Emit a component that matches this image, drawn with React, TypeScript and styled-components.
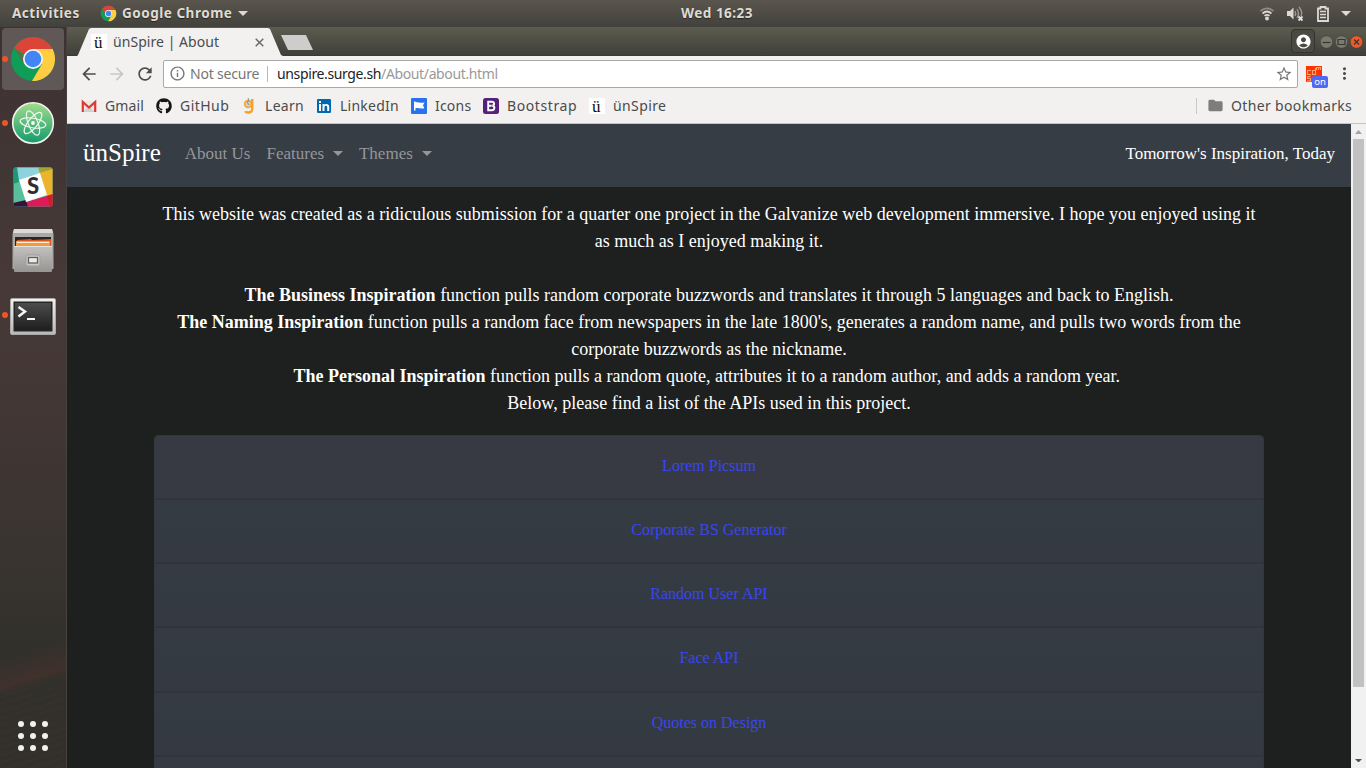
import React from 'react';
import styled, { createGlobalStyle } from 'styled-components';
import {
  MdArrowBack,
  MdArrowForward,
  MdRefresh,
  MdInfoOutline,
  MdStarBorder,
  MdMoreVert,
  MdFolder,
  MdAccountCircle,
} from 'react-icons/md';
import { FaGithub } from 'react-icons/fa';

const ui = '"Noto Sans", "Open Sans", sans-serif';
const serif = '"Liberation Serif", "Times New Roman", serif';

const GlobalStyle = createGlobalStyle`
  * { box-sizing: border-box; }
  body { margin: 0; overflow: hidden; background: #1e201f; }
  svg { display: block; flex: none; }
`;

const Desktop = styled.div`
  width: 1366px;
  height: 768px;
  display: flex;
  flex-direction: column;
  overflow: hidden;
  font-family: ${ui};
`;

const TopBar = styled.header`
  height: 27px;
  flex: none;
  display: grid;
  grid-template-columns: 669px auto 1fr;
  align-items: center;
  padding: 0 15px 0 12px;
  background: linear-gradient(#5a564e, #42413c);
  color: #dfdbd2;
  font-weight: 700;
  font-size: 13.5px;
  line-height: 25px;
  text-shadow: 0 1px 1px rgba(0, 0, 0, 0.5);
`;

const BarGroup = styled.div<{ $end?: boolean }>`
  display: flex;
  align-items: center;
  justify-content: ${(p) => (p.$end ? 'flex-end' : 'flex-start')};
`;

const Label = styled.span<{ $w?: number; $ls?: number }>`
  display: block;
  white-space: nowrap;
  flex: none;
  width: ${(p) => (p.$w ? `${p.$w}px` : 'auto')};
  letter-spacing: ${(p) => p.$ls ?? 0}px;
`;

const Space = styled.span<{ $w: number }>`
  flex: none;
  width: ${(p) => p.$w}px;
`;

const Work = styled.div`
  flex: 1;
  min-height: 0;
  display: flex;
`;

const Dock = styled.nav`
  width: 67px;
  flex: none;
  display: flex;
  flex-direction: column;
  border-right: 1px solid #454140;
  background:
    repeating-linear-gradient(163deg, rgba(110, 60, 50, 0.1) 0 1px, transparent 1px 7px) 0 640px / 67px 101px no-repeat,
    linear-gradient(163deg, transparent 60%, rgba(90, 50, 44, 0.35) 80%, transparent 86%) 0 540px / 67px 130px no-repeat,
    linear-gradient(#3d3232 0, #463938 35%, #433735 50%, #37332f 75%, #31302b 85%, #33302c 100%);
`;

const DockItem = styled.div`
  height: 64px;
  flex: none;
  display: flex;
  align-items: center;
`;

const DockTile = styled.div<{ $active?: boolean }>`
  width: 62px;
  height: 62px;
  margin-left: 2px;
  border-radius: 4px;
  display: flex;
  align-items: center;
  background: ${(p) => (p.$active ? '#605856' : 'transparent')};
`;

const RunDot = styled.i<{ $on?: boolean }>`
  width: 6px;
  height: 6px;
  border-radius: 50%;
  background: ${(p) => (p.$on ? '#ed5523' : 'transparent')};
`;

const DockIcon = styled.div`
  width: 48px;
  height: 48px;
  margin-left: 1px;
`;

const AppsGrid = styled.div`
  width: 30px;
  height: 30px;
  margin: auto auto 17px 18px;
  display: grid;
  grid-template-columns: repeat(3, 6px);
  gap: 6px;
  i {
    width: 6px;
    height: 6px;
    border-radius: 50%;
    background: #f2f1ec;
  }
`;

const Browser = styled.section`
  flex: 1;
  min-width: 0;
  display: flex;
  flex-direction: column;
`;

const TabStrip = styled.div`
  height: 29px;
  flex: none;
  display: flex;
  align-items: flex-end;
  padding: 0 2px 0 10px;
  background: linear-gradient(#5d5c50, #3f403a 96%, #353630);
`;

const Tab = styled.div`
  width: 206px;
  height: 28px;
  display: flex;
  align-items: center;
  padding: 0 16px 0 14px;
  background: #f2f1f0;
  clip-path: polygon(0 100%, 1px 96%, 12px 4%, 14px 0, 191px 0, 193px 4%, 204px 96%, 100% 100%);
  color: #4b4b4b;
  font-size: 14px;
  line-height: 17px;
`;

const TabTitle = styled(Label)`
  padding-bottom: 2px;
`;

const NewTab = styled.div`
  width: 32px;
  height: 15px;
  margin: 0 auto 6px -2px;
  background: #cecdcb;
  clip-path: polygon(0 0, 25px 0, 100% 100%, 7px 100%);
`;

const Favicon = styled.span`
  width: 16px;
  height: 16px;
  flex: none;
  background: #fff;
  color: #111;
  font: 17px/17px ${serif};
  text-indent: 3px;
`;

const ProfileButton = styled.div`
  width: 24px;
  height: 24px;
  margin-bottom: 3px;
  border: 1px solid #33342f;
  border-radius: 4px;
  display: flex;
  align-items: center;
  justify-content: center;
  background: #4a4a43;
  color: #fff;
`;

const WindowControls = styled.div`
  display: flex;
  margin: 0 0 7px 4px;
`;

const Toolbar = styled.div`
  height: 36px;
  flex: none;
  display: flex;
  align-items: center;
  padding: 0 0 1px 12px;
  background: #f2f1f0;
  color: #4c4c4c;
`;

const AddressBar = styled.div`
  width: 1135px;
  height: 28px;
  margin-left: 8px;
  display: flex;
  align-items: center;
  padding: 0 4px 0 5px;
  border: 1px solid #a9a9a9;
  border-radius: 2px;
  background: #fff;
  color: #767676;
  font-size: 14px;
`;

const Host = styled.span`
  color: #222;
`;

const Path = styled.span`
  color: #999;
`;

const StarSlot = styled.span`
  margin-left: auto;
`;

const Divider = styled.span<{ $c: string }>`
  width: 1px;
  height: 16px;
  background: ${(p) => p.$c};
`;

const Extension = styled.div`
  position: relative;
  width: 16px;
  height: 16px;
  margin: 0 13px 0 8px;
  background: #ff3500;
`;

const ExtensionText = styled.svg`
  fill: none;
  stroke: #ffa070;
  stroke-width: 1.1;
`;

const ExtensionBadge = styled.span`
  position: absolute;
  left: 6px;
  top: 10px;
  width: 16px;
  height: 12px;
  border-radius: 2px;
  background: #5168f5;
  color: #fff;
  font-size: 9.5px;
  line-height: 12px;
  text-align: center;
`;

const Bookmarks = styled.div`
  height: 32px;
  flex: none;
  display: flex;
  align-items: center;
  gap: 12px;
  padding: 0 14px 4px 14px;
  border-bottom: 1px solid #c6c5c4;
  background: #f2f1f0;
  color: #4b4b4b;
  font-size: 14px;
`;

const Bookmark = styled.div`
  display: flex;
  align-items: center;
  gap: 8px;
`;

const OtherBookmarks = styled.div`
  margin-left: auto;
  display: flex;
  align-items: center;
`;

const Viewport = styled.main`
  flex: 1;
  min-height: 0;
  display: flex;
  background: #1e201f;
  font-family: ${serif};
`;

const Site = styled.div`
  flex: 1;
  min-width: 0;
  overflow: hidden;
`;

const NavBar = styled.div`
  height: 63px;
  display: flex;
  align-items: center;
  padding: 0 16px 3px;
  background: #373d45;
  color: #fff;
`;

const Brand = styled.span`
  width: 101.8px;
  font-size: 25px;
  line-height: 36px;
  padding-bottom: 2px;
`;

const NavLink = styled.span<{ $w: number }>`
  width: ${(p) => p.$w}px;
  display: flex;
  align-items: center;
  color: #94969a;
  font-size: 17px;
`;

const Caret = styled.i`
  margin: -2px 0 0 9px;
  border: 5px solid transparent;
  border-top-color: currentColor;
  border-bottom: 0;
`;

const Tagline = styled.span`
  margin-left: auto;
  font-size: 17px;
`;

const Container = styled.div`
  width: 1110px;
  margin: 14px auto 0;
  text-align: center;
`;

const Intro = styled.p`
  margin: 0 0 18px;
  color: #fff;
  font-size: 18px;
  line-height: 27px;
  white-space: nowrap;
`;

const ApiList = styled.div`
  border: 1px solid #32363e;
  border-radius: 4px 4px 0 0;
  overflow: hidden;
`;

const ApiRow = styled.div<{ $first?: boolean }>`
  height: 64.14px;
  padding-top: 18px;
  border-bottom: 2px solid #30343c;
  background: ${(p) => (p.$first ? '#373a42' : 'linear-gradient(#343b43, #353a42)')};
  color: #3946ee;
  font-size: 16px;
  line-height: 24px;
`;

const Scrollbar = styled.div`
  width: 15px;
  flex: none;
  display: flex;
  flex-direction: column;
  align-items: center;
  padding: 6px 0 6px;
  background: #f1f1f1;
`;

const Thumb = styled.div`
  width: 11px;
  height: 548px;
  margin: 5px 0 auto 0;
  background: #c1c1c1;
`;

const ChromeLogo = ({ size, ring = true }: { size: number; ring?: boolean }) => (
  <svg width={size} height={size} viewBox="0 0 48 48">
    <circle cx="24" cy="24" r="22" fill="#0f9d58" />
    <path d="M24 24L5 13A22 22 0 0 1 43.4 14L46 24z" fill="#db4437" />
    <path d="M24 14h19.6A22 22 0 0 1 23 46l10-17z" fill="#ffcd40" />
    <path d="M5.2 12.8l9.8 17 4-6z" fill="#b93a2e" opacity=".4" />
    <circle cx="24" cy="24" r="10" fill="#f3f3f3" />
    <circle cx="24" cy="24" r={ring ? 8.3 : 7.8} fill="#4285f4" />
  </svg>
);

const AtomLogo = () => (
  <svg width="48" height="48" viewBox="0 0 48 48">
    <defs>
      <linearGradient id="atom" x1="0" y1="0" x2="0" y2="1">
        <stop offset="0" stopColor="#a2dc8d" />
        <stop offset="1" stopColor="#129b6c" />
      </linearGradient>
    </defs>
    <circle cx="24" cy="24" r="20.3" fill="url(#atom)" stroke="#f2f2ee" strokeWidth="1.6" />
    <g fill="none" stroke="#eefaf0" strokeWidth="1.2">
      <ellipse cx="24" cy="24" rx="13" ry="4.800" transform="rotate(10 24 24)" />
      <ellipse cx="24" cy="24" rx="13" ry="4.800" transform="rotate(68 24 24)" />
      <ellipse cx="24" cy="24" rx="13" ry="4.800" transform="rotate(128 24 24)" />
    </g>
    <circle cx="24" cy="24" r="1.900" fill="#f5fff5" />
  </svg>
);

const SlackLogo = () => (
  <svg width="48" height="48" viewBox="0 0 48 48">
    <defs>
      <clipPath id="slackbox">
        <rect x="4.500" y="4.500" width="39" height="39" rx="2" />
      </clipPath>
    </defs>
    <g clipPath="url(#slackbox)">
      <rect x="4" y="4" width="40" height="40" fill="#58bf9a" />
      <path d="M4 4h5l4 14-9 3z" fill="#1f9579" />
      <path d="M8 4h22l3 7-23 7z" fill="#8ed3dc" />
      <path d="M29 4h15v3l-13 4z" fill="#9fa62f" />
      <path d="M30 10l14-4v26l-6 1z" fill="#ecb32d" />
      <path d="M38 33l6-2v13H19l-2-5z" fill="#e01a59" />
      <path d="M38 33l6-2v13h-3z" fill="#cc2027" />
      <path d="M4 40l13-3 2 7H4z" fill="#361238" />
      <path d="M10 17l21-7 7 22-21 7z" fill="#fff" />
    </g>
    <text x="24" y="31" textAnchor="middle" fontFamily="Lato, sans-serif" fontWeight="900" fontSize="22" fill="#2f2c35">S</text>
  </svg>
);

const FilesLogo = () => (
  <svg width="48" height="48" viewBox="0 0 48 48">
    <defs>
      <linearGradient id="cab" x1="0" y1="0" x2="0" y2="1">
        <stop offset="0" stopColor="#c3c2c0" />
        <stop offset="1" stopColor="#969593" />
      </linearGradient>
    </defs>
    <path d="M5 2h38l1.500 5v35H3.500V7z" fill="#aaa9a6" />
    <path d="M5 2h38l1 4H4z" fill="#dbdad8" />
    <rect x="6" y="10" width="36" height="12" fill="#282725" />
    <path d="M8 13l14-1 1 1 19-1v7H8z" fill="#d8571b" />
    <path d="M7 14h34v5H7z" fill="#f39a3e" />
    <path d="M8 15.500h32" stroke="#fff1d9" strokeWidth="1" />
    <rect x="5" y="19" width="38" height="26" rx="1" fill="url(#cab)" />
    <path d="M5 19.500h38" stroke="#e4e3e0" />
    <rect x="17" y="28" width="14" height="11" rx="2" fill="#c9c8c5" stroke="#a19f9c" />
    <rect x="19.500" y="30.500" width="9" height="5.500" fill="#ecebe9" stroke="#63615e" strokeWidth="1.300" />
  </svg>
);

const TerminalLogo = () => (
  <svg width="48" height="48" viewBox="0 0 48 48">
    <defs>
      <linearGradient id="term" x1="0" y1="0" x2="0" y2="1">
        <stop offset="0" stopColor="#4b4c4b" />
        <stop offset="1" stopColor="#1d1e1d" />
      </linearGradient>
      <linearGradient id="bezel" x1="0" y1="0" x2="0" y2="1">
        <stop offset="0" stopColor="#f1f1ef" />
        <stop offset="1" stopColor="#b9b8b6" />
      </linearGradient>
    </defs>
    <rect x="1.500" y="7.500" width="45" height="36" rx="1.500" fill="url(#bezel)" stroke="#aaa9a7" />
    <rect x="4.500" y="10.500" width="39" height="30" fill="#252625" />
    <rect x="6" y="12" width="36" height="27" fill="url(#term)" />
    <path d="M9.500 16l6.500 4.500-6.500 5" fill="none" stroke="#f4f4f2" strokeWidth="2.500" />
    <path d="M18 28h8" stroke="#f4f4f2" strokeWidth="2" />
  </svg>
);

const Triangle = ({ w = 10, color = '#dfdbd2' }: { w?: number; color?: string }) => (
  <svg width={w} height={w / 2} viewBox="0 0 10 5">
    <path d="M0 0h10L5 5z" fill={color} />
  </svg>
);

const WindowButton = ({ kind }: { kind: 'min' | 'max' | 'close' }) => (
  <svg width="15" height="14" viewBox="0 0 15 14">
    <circle cx="7.500" cy="7" r="6.200" fill={kind === 'close' ? '#ee5a2b' : '#7c7a70'} stroke="#393a34" strokeWidth=".5" />
    <path
      d={kind === 'min' ? 'M3.500 7.500h8' : kind === 'max' ? 'M4 4.500h7v5H4z' : 'M5 4.500l5 5M10 4.500l-5 5'}
      fill="none"
      stroke="#38372f"
      strokeWidth="1.200"
    />
  </svg>
);

const GmailIcon = () => (
  <svg width="16" height="16" viewBox="0 0 16 16">
    <path d="M1 3h14v11H1z" fill="#e9e8e7" />
    <path d="M2 14l6-6 6 6z" fill="#d2d1d0" />
    <path d="M1.800 14V4L8 9.500 14.200 4v10" fill="none" stroke="#db3a32" strokeWidth="2.200" />
  </svg>
);

const LearnIcon = () => (
  <svg width="16" height="16" viewBox="0 0 16 16">
    <circle cx="7" cy="6" r="3.400" fill="#d9cdb2" stroke="#f5a623" strokeWidth="1.500" />
    <path d="M11.200 1v9.500c0 3.300-1.800 4.200-4.200 4-1.200 0-2.400-.5-2.700-1.300" fill="none" stroke="#f7a128" strokeWidth="2.500" />
    <path d="M7 0l1 3-2 1 2 3" stroke="#8296a0" fill="none" />
  </svg>
);

const LinkedInIcon = () => (
  <svg width="16" height="16" viewBox="0 0 16 16">
    <rect x="1" y="1" width="14" height="14" rx="1" fill="#0068b0" />
    <path d="M3 6h2v7H3zM3 3h2v2H3zM6.500 6h2v1c1-1.600 4.700-1.700 4.700 1.700V13h-2V9.300c0-2.300-2.700-2.100-2.700 0V13h-2z" fill="#fff" />
  </svg>
);

const FlagIcon = () => (
  <svg width="16" height="16" viewBox="0 0 16 16">
    <rect width="16" height="16" rx="1" fill="#2873ed" />
    <path d="M3 3.500h1.500v9H3zM4 4.500c3-.8 5 1 9.500 0L12 7.300l1.300 3c-4 .8-6-.8-9.300 0z" fill="#fff" />
  </svg>
);

const BootstrapIcon = () => (
  <svg width="16" height="16" viewBox="0 0 16 16">
    <rect width="16" height="16" rx="2.500" fill="#56217a" />
    <path d="M5.200 3.700h3.700c2.800 0 2.800 3.500.5 4 3 .5 2.500 4.600-.7 4.600H5.200zM5.200 7.800h3.500" fill="none" stroke="#fff" strokeWidth="1.900" />
  </svg>
);

const WifiIcon = () => (
  <svg width="16" height="16" viewBox="0 0 16 16" fill="none" stroke="#dcdad3" strokeWidth="1.700">
    <path d="M1.500 5Q8-.2 14.500 5" opacity=".45" />
    <path d="M3.500 7.500Q8 3.500 12.500 7.500M5.500 9.800Q8 7.800 10.500 9.800" />
    <circle cx="8" cy="12.500" r="1.900" fill="#dcdad3" stroke="none" />
  </svg>
);

const VolumeIcon = () => (
  <svg width="18" height="16" viewBox="0 0 18 16" fill="none">
    <path d="M1 5h3l3.500-3.500v12L4 10H1z" fill="#dcdad3" />
    <path d="M9 5q1.500 2.500 0 5M11 3q3 4.500 0 9M13 1q4 5 2 9" stroke="#a09d94" strokeWidth="1.300" />
    <path d="M12.500 10.500l4 4M16.500 10.500l-4 4" stroke="#e4e2dc" strokeWidth="1.800" />
  </svg>
);

const BatteryIcon = () => (
  <svg width="12" height="16" viewBox="0 0 12 16" fill="none" stroke="#dcdad3" strokeWidth="1.800">
    <path d="M1 2.500h2.500v-1.500h5v1.500H11V15H1z" />
    <path d="M3 5.500h6M3 8.500h6M3 11.500h6" strokeWidth="1.400" />
  </svg>
);

const bookmarks = [
  { name: 'Gmail', width: 39, ls: 0.1, icon: <GmailIcon /> },
  { name: 'GitHub', width: 49, ls: 0.45, icon: <FaGithub size={16} color="#161616" /> },
  { name: 'Learn', width: 39, ls: 0.3, icon: <LearnIcon /> },
  { name: 'LinkedIn', width: 59, ls: 0.25, icon: <LinkedInIcon /> },
  { name: 'Icons', width: 36, ls: 0.2, icon: <FlagIcon /> },
  { name: 'Bootstrap', width: 70, ls: 0.6, icon: <BootstrapIcon /> },
  { name: 'ünSpire', width: 53, ls: 0.4, icon: <Favicon>ü</Favicon> },
];

const apis = ['Lorem Picsum', 'Corporate BS Generator', 'Random User API', 'Face API', 'Quotes on Design', ''];

const dockApps = [
  { id: 'chrome', running: true, active: true, icon: <ChromeLogo size={48} /> },
  { id: 'atom', running: true, icon: <AtomLogo /> },
  { id: 'slack', icon: <SlackLogo /> },
  { id: 'files', icon: <FilesLogo /> },
  { id: 'terminal', running: true, icon: <TerminalLogo /> },
];

export default function App() {
  return (
    <Desktop>
      <GlobalStyle />
      <TopBar>
        <BarGroup>
          <Label $w={88} $ls={0.5}>Activities</Label>
          <ChromeLogo size={17} ring={false} />
          <Space $w={5} />
          <Label $w={116} $ls={0.52}>Google Chrome</Label>
          <Triangle />
        </BarGroup>
        <Label $ls={0.5}>Wed 16:23</Label>
        <BarGroup $end>
          <WifiIcon />
          <Space $w={11} />
          <VolumeIcon />
          <Space $w={13} />
          <BatteryIcon />
          <Space $w={12} />
          <Triangle />
        </BarGroup>
      </TopBar>
      <Work>
        <Dock>
          {dockApps.map((a) => (
            <DockItem key={a.id}>
              <DockTile $active={a.active}>
                <RunDot $on={a.running} />
                <DockIcon>{a.icon}</DockIcon>
              </DockTile>
            </DockItem>
          ))}
          <AppsGrid>
            {Array.from({ length: 9 }, (_, i) => (
              <i key={i} />
            ))}
          </AppsGrid>
        </Dock>
        <Browser>
          <TabStrip>
            <Tab>
              <Favicon>ü</Favicon>
              <Space $w={6} />
              <TabTitle $w={142} $ls={0.05}>ünSpire | About</TabTitle>
              <svg width="9" height="9" viewBox="0 0 9 9">
                <path d="M.7.7l7.600 7.600M8.300.7L.7 8.300" stroke="#666" strokeWidth="1.400" />
              </svg>
            </Tab>
            <NewTab />
            <ProfileButton>
              <MdAccountCircle size={17} />
            </ProfileButton>
            <WindowControls>
              <WindowButton kind="min" />
              <WindowButton kind="max" />
              <WindowButton kind="close" />
            </WindowControls>
          </TabStrip>
          <Toolbar>
            <MdArrowBack size={20} />
            <Space $w={8} />
            <MdArrowForward size={20} color="#c8c7c6" />
            <Space $w={8} />
            <MdRefresh size={20} />
            <AddressBar>
              <MdInfoOutline size={17} />
              <Space $w={4} />
              <Label $w={77} $ls={-0.2}>Not secure</Label>
              <Divider $c="#b8b8b8" />
              <Space $w={9} />
              <Label $ls={-0.37}>
                <Host>unspire.surge.sh</Host>
                <Path>/About/about.html</Path>
              </Label>
              <StarSlot>
                <MdStarBorder size={18} />
              </StarSlot>
            </AddressBar>
            <Extension>
              <ExtensionText width="16" height="16" viewBox="0 0 16 16">
                <path d="M5 4.500H1.500v4H5M9.500 2v6.500H6.500v-4h3M10.500 4V1.500h4V4M12.500 1.500V4M4.500 10.500H1.500v2h3v2.500H1" />
              </ExtensionText>
              <ExtensionBadge>on</ExtensionBadge>
            </Extension>
            <MdMoreVert size={19} />
          </Toolbar>
          <Bookmarks>
            {bookmarks.map((b) => (
              <Bookmark key={b.name}>
                {b.icon}
                <Label $w={b.width} $ls={b.ls}>{b.name}</Label>
              </Bookmark>
            ))}
            <OtherBookmarks>
              <Divider $c="#cbcac9" />
              <Space $w={10} />
              <MdFolder size={17} color="#7d7d7d" />
              <Space $w={7} />
              <Label $w={121} $ls={0.35}>Other bookmarks</Label>
            </OtherBookmarks>
          </Bookmarks>
          <Viewport>
            <Site>
              <NavBar>
                <Brand>ünSpire</Brand>
                <NavLink $w={81.7}>About Us</NavLink>
                <NavLink $w={92.500}>Features<Caret /></NavLink>
                <NavLink $w={80}>Themes<Caret /></NavLink>
                <Tagline>Tomorrow's Inspiration, Today</Tagline>
              </NavBar>
              <Container>
                <Intro>
                  This website was created as a ridiculous submission for a quarter one project in the Galvanize web development immersive. I hope you enjoyed using it
                  <br />
                  as much as I enjoyed making it.
                  <br />
                  <br />
                  <b>The Business Inspiration</b> function pulls random corporate buzzwords and translates it through 5 languages and back to English.
                  <br />
                  <b>The Naming Inspiration</b> function pulls a random face from newspapers in the late 1800's, generates a random name, and pulls two words from the
                  <br />
                  corporate buzzwords as the nickname.
                  <br />
                  <b>The Personal Inspiration</b> function pulls a random quote, attributes it to a random author, and adds a random year.&nbsp;
                  <br />
                  Below, please find a list of the APIs used in this project.
                </Intro>
                <ApiList>
                  {apis.map((name, i) => (
                    <ApiRow key={i} $first={i === 0}>{name}</ApiRow>
                  ))}
                </ApiList>
              </Container>
            </Site>
            <Scrollbar>
              <svg width="7" height="4" viewBox="0 0 7 4">
                <path d="M0 4h7L3.500 0z" fill="#a3a3a3" />
              </svg>
              <Thumb />
              <Triangle w={7} color="#505050" />
            </Scrollbar>
          </Viewport>
        </Browser>
      </Work>
    </Desktop>
  );
}
